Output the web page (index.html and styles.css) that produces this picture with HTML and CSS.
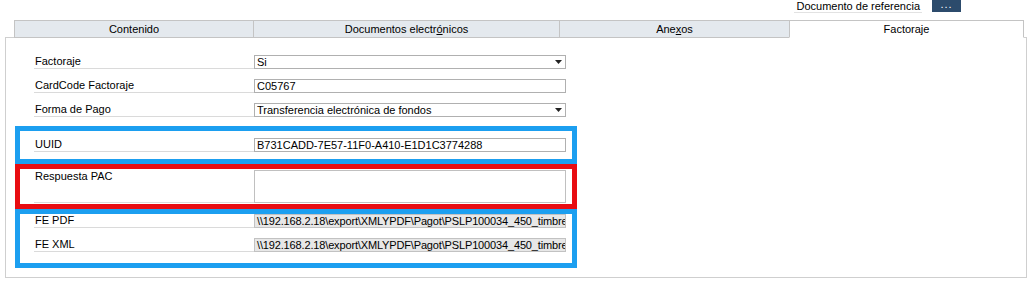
FILE: index.html
```html
<!DOCTYPE html>
<html lang="es">
<head>
	<meta charset="UTF-8">
	<title>Factoraje</title>
	<link rel="stylesheet" href="styles.css">
</head>
<body>
	<div class="topbar">
		<span class="ref-label">Documento de referencia</span>
		<span class="ref-btn">...</span>
	</div>
	<div class="tabs">
		<div class="tab tab-1">Contenido</div>
		<div class="tab tab-2">Documentos electr<u>ó</u>nicos</div>
		<div class="tab tab-3">Ane<u>x</u>os</div>
		<div class="tab tab-4 active">Factoraje</div>
	</div>
	<div class="panel">
		<div class="group plain">
			<div class="row">
				<div class="label">Factoraje</div>
				<div class="field select"><span class="val">Si</span>
					<svg class="arrow" width="7" height="4" viewBox="0 0 7 4"><path d="M0 0h7L3.5 4z" fill="#222"/></svg>
				</div>
			</div>
			<div class="row">
				<div class="label">CardCode Factoraje</div>
				<div class="field"><span class="val">C05767</span></div>
			</div>
			<div class="row">
				<div class="label">Forma de Pago</div>
				<div class="field select"><span class="val">Transferencia electrónica de fondos</span>
					<svg class="arrow" width="7" height="4" viewBox="0 0 7 4"><path d="M0 0h7L3.5 4z" fill="#222"/></svg>
				</div>
			</div>
		</div>
		<div class="group blue uuid">
			<div class="row">
				<div class="label">UUID</div>
				<div class="field"><span class="val">B731CADD-7E57-11F0-A410-E1D1C3774288</span></div>
			</div>
		</div>
		<div class="group red pac">
			<div class="row tall">
				<div class="label">Respuesta PAC</div>
				<div class="field area"></div>
			</div>
		</div>
		<div class="group blue files">
			<div class="row">
				<div class="label">FE PDF</div>
				<div class="field disabled"><span class="val">\\192.168.2.18\export\XMLYPDF\Pagot\PSLP100034_450_timbre</span></div>
			</div>
			<div class="row">
				<div class="label">FE XML</div>
				<div class="field disabled"><span class="val">\\192.168.2.18\export\XMLYPDF\Pagot\PSLP100034_450_timbre</span></div>
			</div>
		</div>
	</div>
</body>
</html>
```

FILE: styles.css
```css
*{
	padding: 0;
	margin: 0;
	box-sizing: border-box;
}
body{
	background: #fff;
	font-family: "Liberation Sans", Arial, sans-serif;
	font-size: 11px;
	color: #000;
	width: 1034px;
}
.topbar{
	display: flex;
	justify-content: flex-end;
	align-items: flex-start;
	height: 13px;
	padding-right: 73px;
	margin-bottom: 7px;
}
.ref-label{
	line-height: 12px;
	height: 13px;
	padding: 0 2px;
	border-bottom: 1px solid #e2e2e2;
}
.ref-btn{
	width: 29px;
	height: 12px;
	margin-left: 10px;
	background: #2c4b6c;
	color: #fff;
	text-align: center;
	line-height: 9px;
	font-size: 11px;
	letter-spacing: 1px;
}
.tabs{
	display: flex;
	margin-left: 14px;
	margin-bottom: -1px;
	position: relative;
}
.tab{
	height: 18px;
	line-height: 16px;
	text-align: center;
	background: #e4e9ee;
	border-top: 1px solid #c4c4c4;
	border-left: 1px solid #c4c4c4;
	border-bottom: 1px solid #c4c4c4;
}
.tab u{
	text-decoration-thickness: 1px;
}
.tab-1{ width: 239px; }
.tab-2{ width: 306px; }
.tab-3{ width: 230px; }
.tab-4{ width: 235px; }
.tab.active{
	background: #fff;
	border-right: 1px solid #c4c4c4;
	border-bottom-color: #fff;
}
.panel{
	margin-left: 5px;
	width: 1022px;
	height: 241px;
	border: 1px solid #cfcfcf;
	padding-top: 17px;
}
.group{
	width: 562px;
	margin-left: 9px;
	border: 5px solid transparent;
	padding: 0 6px 0 14px;
	display: flex;
	flex-direction: column;
	gap: 10px;
}
.group.blue{
	border-color: #1c9ff0;
}
.group.red{
	border-color: #e80d12;
}
.plain{
	padding-top: 0;
	padding-bottom: 4px;
	margin-top: -5px;
}
.uuid{
	padding-top: 7px;
	padding-bottom: 7px;
}
.pac{
	padding-top: 1px;
	padding-bottom: 1px;
}
.files{
	padding-top: 0;
	padding-bottom: 11px;
}
.row{
	display: flex;
	height: 14px;
}
.row.tall{
	height: 33px;
}
.label{
	width: 220px;
	padding-left: 1px;
	line-height: 13px;
	border-bottom: 1px solid #dadada;
}
.field{
	width: 312px;
	height: 100%;
	border: 1px solid #b0b0b0;
	background: #fff;
	display: flex;
	align-items: center;
	overflow: hidden;
	padding-left: 2px;
}
.val{
	white-space: nowrap;
	line-height: 12px;
}
.select{
	justify-content: space-between;
}
.arrow{
	flex: none;
	margin-right: 3px;
}
.field.disabled{
	background: #e7e7e7;
	border-color: #c2c2c2;
	letter-spacing: -0.15px;
}
.field.area{
	border-color: #c0c0c0;
}
```
